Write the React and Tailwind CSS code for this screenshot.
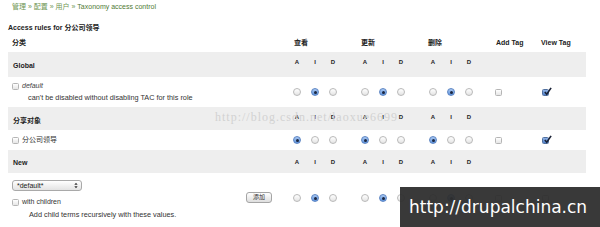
import React from "react";

const FONT = {
  fontFamily: '"Liberation Sans", "Noto Sans CJK SC", sans-serif',
};

const Radio = ({ on }) =>
  on ? (
    <span className="flex h-[8px] w-[8px] items-center justify-center rounded-full border border-[#5d86c4] bg-gradient-to-b from-[#a9c8f2] to-[#5f93dc]">
      <span className="h-[3px] w-[3px] rounded-full bg-[#1c2740]" />
    </span>
  ) : (
    <span className="h-[8px] w-[8px] rounded-full border border-[#b9b9b9] bg-gradient-to-b from-[#ffffff] to-[#e4e4e4]" />
  );

const Check = ({ on }) =>
  on ? (
    <span className="relative block h-[7px] w-[7px] rounded-[1.5px] border border-[#4f6f9f] bg-gradient-to-b from-[#8fb2e6] to-[#4f7fc8]">
      <svg
        viewBox="0 0 10 10"
        className="absolute -top-[3px] left-[0px] h-[9px] w-[9px]"
      >
        <path d="M2 5.5 L4.2 8 L9 1" fill="none" stroke="#1a2236" strokeWidth="1.8" />
      </svg>
    </span>
  ) : (
    <span className="block h-[7px] w-[7px] rounded-[1.5px] border border-[#b5b5b5] bg-gradient-to-b from-[#ffffff] to-[#e6e6e6]" />
  );

const AidGroup = () => (
  <div className="flex w-[68px]">
    {["A", "I", "D"].map((l) => (
      <span
        key={l}
        className="flex w-[18px] justify-center text-[6px] font-bold leading-[8px] text-[#222]"
      >
        {l}
      </span>
    ))}
  </div>
);

const RadioGroup = ({ sel }) => (
  <div className="flex w-[68px]">
    {[0, 1, 2].map((i) => (
      <span key={i} className="flex w-[18px] justify-center">
        <Radio on={sel === i} />
      </span>
    ))}
  </div>
);

const Cells = ({ sel, view }) => (
  <>
    <RadioGroup sel={sel} />
    <RadioGroup sel={sel} />
    <RadioGroup sel={sel} />
    <div className="w-[44px] pl-[3px]">
      <Check on={false} />
    </div>
    <div className="w-[50px] pl-[6px]">
      <Check on={view} />
    </div>
  </>
);

const Band = ({ title, h, tp, ap }) => (
  <div className={`flex bg-[#eeeeee] ${h}`}>
    <div className={`w-[280px] pl-[5px] text-[7px] font-bold leading-[8px] text-[#222] ${tp}`}>
      {title}
    </div>
    <div className={`flex ${ap}`}>
      <AidGroup />
      <AidGroup />
      <AidGroup />
    </div>
  </div>
);

export default function App() {
  return (
    <div className="relative h-[227px] w-[600px] overflow-hidden bg-white text-[#333]" style={FONT}>
      <div className="ml-[8px] w-[578px]">
        <div className="h-[14px] pl-[4px] text-[7px] leading-[14px] text-[#6f9653]">
          管理 » 配置 » 用户 » <span className="text-[#4f7a35]">Taxonomy access control</span>
        </div>

        <div className="mt-[7px] h-[14px] text-[7px] font-bold leading-[14px] text-[#222]">
          Access rules for 分公司领导
        </div>

        <div className="flex h-[17px] items-center text-[7px] font-bold text-[#222]">
          <div className="w-[280px] pl-[4px]">分类</div>
          <div className="w-[68px] pl-[6px]">查看</div>
          <div className="w-[68px] pl-[5px]">更新</div>
          <div className="w-[68px] pl-[4px]">删除</div>
          <div className="w-[44px] pl-[4px]">Add Tag</div>
          <div className="w-[50px] pl-[5px]">View Tag</div>
        </div>

        <Band title="Global" h="h-[25px]" tp="pt-[10px]" ap="pt-[6px]" />

        <div className="flex h-[30px] items-center">
          <div className="w-[280px] self-start pt-[4px] text-[7px] leading-[10px]">
            <div className="flex items-center gap-[3px] pl-[4px]">
              <Check on={false} />
              <em className="italic text-[#444]">default</em>
            </div>
            <div className="mt-[2px] pl-[20px] text-[7.3px] text-[#333]">
              can't be disabled without disabling TAC for this role
            </div>
          </div>
          <Cells sel={1} view />
        </div>

        <Band title="分享对象" h="h-[23px]" tp="pt-[10px]" ap="pt-[6px]" />

        <div className="flex h-[20px] items-center">
          <div className="flex w-[280px] items-center gap-[3px] pl-[4px] text-[7px] leading-[10px]">
            <Check on={false} />
            <span>分公司领导</span>
          </div>
          <Cells sel={0} view />
        </div>

        <Band title="New" h="h-[23px]" tp="pt-[9px]" ap="pt-[8px]" />

        <div className="flex h-[54px] items-start">
          <div className="flex w-[280px] pr-[16px]">
            <div className="flex-1 pl-[4px] text-[7px]">
              <div className="mt-[7px] flex h-[11px] w-[70px] items-center justify-between rounded-[3px] border border-[#a9a9a9] bg-gradient-to-b from-[#ffffff] to-[#e3e3e3] pl-[4px] pr-[3px] leading-[9px] text-[#222]">
                <span>*default*</span>
                <svg viewBox="0 0 6 10" className="h-[7px] w-[4px]">
                  <path d="M0.5 4 L3 1 L5.5 4 Z M0.5 6 L3 9 L5.5 6 Z" fill="#333" />
                </svg>
              </div>
              <div className="mt-[7px] flex h-[8px] items-center gap-[3px] leading-[8px]">
                <Check on={false} />
                <span>with children</span>
              </div>
              <div className="mt-[5px] pl-[17px] text-[7.3px] leading-[8px]">
                Add child terms recursively with these values.
              </div>
            </div>
            <div className="mt-[19px] flex h-[11px] w-[26px] items-center justify-center rounded-[3px] border border-[#a5a5a5] bg-gradient-to-b from-[#ffffff] to-[#dedede] text-[6px] text-[#333]">
              添加
            </div>
          </div>
          <div className="flex items-center pt-[21px]">
            <Cells sel={1} view={false} />
          </div>
        </div>
      </div>

      <div
        className="absolute left-[215px] top-[110px] text-[12px] leading-[14px] tracking-[1px] text-[#d2d2d2]"
        style={{ fontFamily: '"Liberation Serif", serif' }}
      >
        http://blog.csdn.net/laoxue6699
      </div>

      <div className="absolute left-[400px] top-[187px] flex h-[40px] w-[200px] items-center bg-[#2e2e2e]/95 pl-[9px]">
        <span
          className="text-[17px] leading-[20px] text-white"
          style={{ fontFamily: '"DejaVu Sans", sans-serif' }}
        >
          http://drupalchina.cn
        </span>
      </div>
    </div>
  );
}
